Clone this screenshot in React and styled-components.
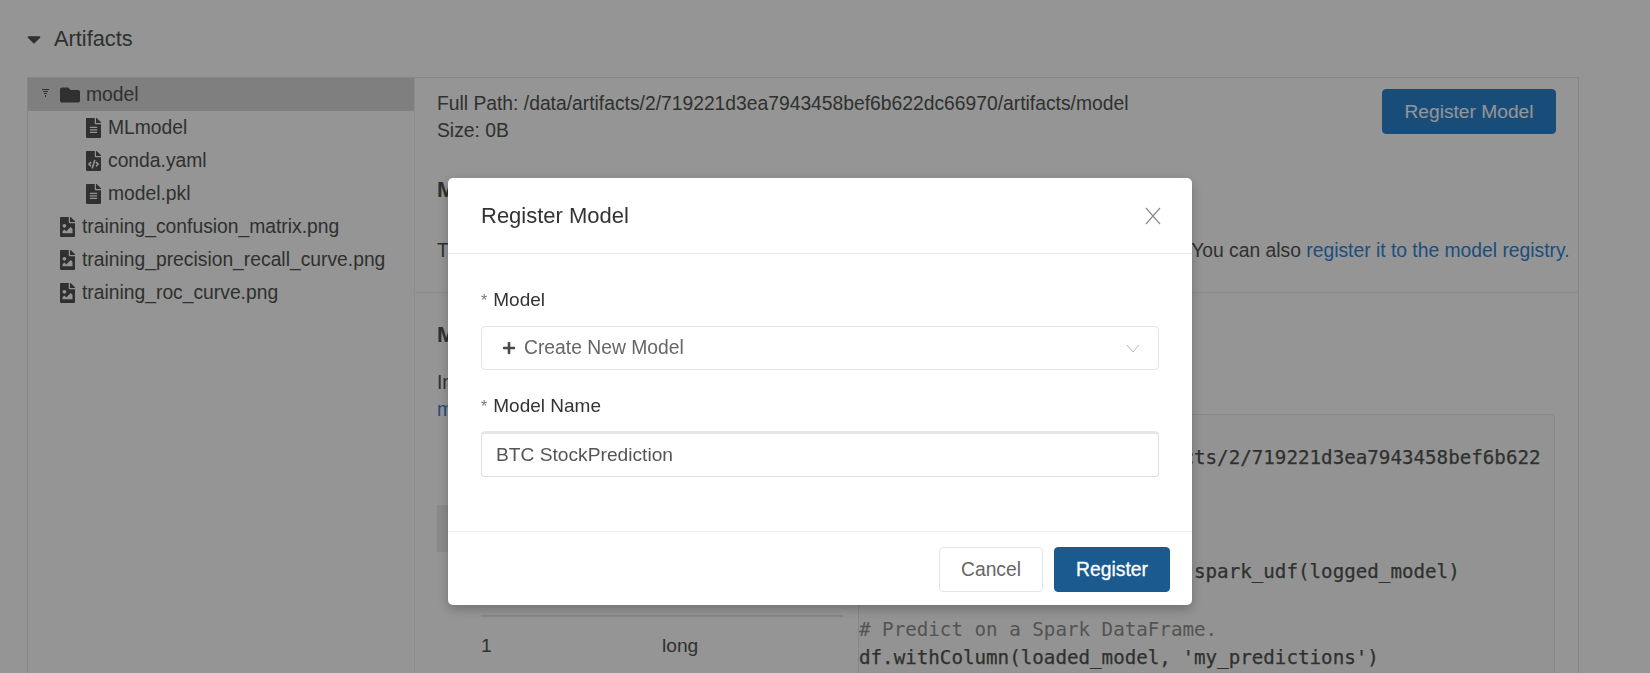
import React from 'react'
import styled, { createGlobalStyle } from 'styled-components'
import { FaCaretDown, FaFolder, FaFileAlt, FaFileCode, FaFileImage, FaPlus } from 'react-icons/fa'

const GlobalStyle = createGlobalStyle`
  html, body {
    margin: 0;
    height: 673px;
    overflow: hidden;
    background: #fff;
    font-family: "Liberation Sans", Arial, sans-serif;
    color: #4f5450;
  }
`

const Page = styled.div`
  width: 1650px;
  height: 673px;
  overflow: hidden;
`

const SectionTitle = styled.div`
  height: 77px;
  display: flex;
  align-items: center;
  padding-left: 27px;
  font-size: 21.8px;
  gap: 13px;

  svg {
    width: 14px;
    height: 22px;
  }
`

const Panel = styled.div`
  display: flex;
  margin: 0 71px 0 27px;
  border: 1px solid #e6e6e6;
  height: 640px;
  overflow: hidden;
`

const Sidebar = styled.div`
  width: 386px;
  flex: none;
  border-right: 1px solid #f2f2f2;
`

const TreeRow = styled.div`
  height: 33px;
  display: flex;
  align-items: center;
  padding-left: ${({ $depth }) => ($depth === 2 ? 58 : $depth === 1 ? 32 : 14)}px;
  font-size: 19.3px;
  background: ${({ $selected }) => ($selected ? '#d9d9d9' : 'transparent')};

  svg {
    flex: none;
  }
`

const TreeCaret = styled.svg`
  width: 7px;
  height: 8px;
  margin-right: 11px;
  position: relative;
  top: -2px;
`

const FileGlyph = styled.span`
  display: inline-flex;

  svg {
    width: 15px;
    height: 20px;
  }
`

const TreeLabel = styled.span`
  margin-left: ${({ $gap }) => $gap}px;
`

const Main = styled.div`
  flex: 1;
  min-width: 0;
`

const MainHeader = styled.div`
  height: 76px;
  display: flex;
  justify-content: space-between;
  align-items: center;
  padding: 2px 22px 0;
  box-sizing: border-box;
  border-bottom: 1px solid #fbfbfb;
  font-size: 19.3px;
  line-height: 27px;
`

const PrimaryButton = styled.button`
  background: #2a84d0;
  color: #fff;
  border: 1px solid #2a84d0;
  border-radius: 4px;
  width: 174px;
  height: 45px;
  margin-top: -10px;
  font: inherit;
  font-size: 19.2px;
`

const Block = styled.div`
  padding: 24px 22px 28px;
  border-bottom: 1px solid #eeeeee;
`

const BlockHeading = styled.div`
  font-size: 22px;
  line-height: 24px;
  font-weight: 700;
`

const Paragraph = styled.p`
  margin: ${({ $top }) => $top}px 0 0;
  font-size: 19.3px;
  line-height: 27px;
  white-space: nowrap;
`

const Link = styled.a`
  color: #2f86d8;
`

const SchemaBlock = styled.div`
  padding: 30px 22px 0;
`

const SchemaGrid = styled.div`
  display: grid;
  grid-template-columns: 406px 697px;
  column-gap: 15px;
  margin-top: 22px;
`

const SchemaTable = styled.div`
  margin-top: 82px;
`

const SchemaHead = styled.div`
  height: 47px;
  background: #eeeeee;
`

const SchemaRow = styled.div`
  display: grid;
  grid-template-columns: 181px 1fr;
  align-items: center;
  margin-left: 44px;
  height: ${({ $height }) => $height}px;
  border-bottom: ${({ $line }) => ($line ? '2px solid #e8e8e8' : 'none')};
  font-size: 19.2px;
`

const CodeBox = styled.pre`
  margin: 45px 0 0;
  border: 1px solid #e8e8e8;
  border-radius: 4px;
  background: #fbfbfb;
  padding: 29px 0 0;
  overflow: hidden;
  font-family: "DejaVu Sans Mono", monospace;
  font-size: 19.2px;
  line-height: 28.6px;
  height: 400px;
  -webkit-text-stroke: 0.25px #4f5450;
`

const CodeComment = styled.span`
  color: #8f8f8f;
  -webkit-text-stroke: 0;
`

const Backdrop = styled.div`
  position: fixed;
  inset: 0;
  background: rgba(0, 0, 0, 0.415);
`

const Modal = styled.div`
  position: absolute;
  left: 448px;
  top: 178px;
  width: 744px;
  height: 427px;
  display: flex;
  flex-direction: column;
  background: #fff;
  border-radius: 5px;
  box-shadow: 0 4px 12px rgba(0, 0, 0, 0.25);
`

const ModalHeader = styled.div`
  height: 75px;
  flex: none;
  display: flex;
  align-items: center;
  justify-content: space-between;
  padding: 0 31px 0 33px;
  border-bottom: 1px solid #e8e8e8;
  color: #333;
  font-size: 22px;
`

const ModalBody = styled.div`
  flex: 1;
  padding: 33px 33px 0;
`

const FieldLabel = styled.label`
  display: block;
  height: 26px;
  line-height: 26px;
  margin-top: ${({ $top }) => $top}px;
  font-size: 19px;
  color: #333;

  i {
    font-style: normal;
    font-size: 16px;
    color: #777;
    margin-right: 6px;
  }
`

const SelectBox = styled.div`
  height: 44px;
  box-sizing: border-box;
  margin-top: 13px;
  display: flex;
  align-items: center;
  padding: 0 18px 0 20px;
  border: 1px solid #e4e4e4;
  border-radius: 4px;
  color: #666;
  font-size: 19.3px;

  svg:first-child {
    color: #4a4a4a;
    margin-right: 8px;
  }

  svg:last-child {
    margin-left: auto;
  }
`

const TextInput = styled.input`
  display: block;
  width: 100%;
  height: 46px;
  box-sizing: border-box;
  margin-top: 12px;
  padding: 0 14px;
  border: 1px solid #e0e0e0;
  border-top: 3px solid #e6e6e6;
  border-radius: 4px;
  color: #555;
  font: inherit;
  font-size: 19.2px;
  outline: none;
`

const ModalFooter = styled.div`
  height: 74px;
  flex: none;
  box-sizing: border-box;
  display: flex;
  justify-content: flex-end;
  gap: 11px;
  padding: 15px 22px 0 0;
  border-top: 1px solid #eeeeee;
`

const FooterButton = styled.button`
  width: ${({ $primary }) => ($primary ? 116 : 104)}px;
  height: 45px;
  border-radius: 4px;
  border: 1px solid ${({ $primary }) => ($primary ? '#1a5a8e' : '#e6e6e6')};
  background: ${({ $primary }) => ($primary ? '#1a5a8e' : '#fff')};
  color: ${({ $primary }) => ($primary ? '#fff' : '#666')};
  font-family: inherit;
  font-size: 19.3px;
  -webkit-text-stroke: ${({ $primary }) => ($primary ? '0.3px #fff' : '0')};
`

const files = [
  { name: 'MLmodel', Icon: FaFileAlt, depth: 2 },
  { name: 'conda.yaml', Icon: FaFileCode, depth: 2 },
  { name: 'model.pkl', Icon: FaFileAlt, depth: 2 },
  { name: 'training_confusion_matrix.png', Icon: FaFileImage, depth: 1 },
  { name: 'training_precision_recall_curve.png', Icon: FaFileImage, depth: 1 },
  { name: 'training_roc_curve.png', Icon: FaFileImage, depth: 1 },
]

const App = () => (
  <Page>
    <GlobalStyle />
    <SectionTitle>
      <FaCaretDown />
      Artifacts
    </SectionTitle>
    <Panel>
      <Sidebar>
        <TreeRow $selected $depth={0}>
          <TreeCaret viewBox="0 0 7 8">
            <path d="M0 0h7v1H0zM1 2h5v1H1zM2 4h3v1H2zM3 6h1v2H3z" fill="#4f5450" />
          </TreeCaret>
          <FaFolder size={20} />
          <TreeLabel $gap={6}>model</TreeLabel>
        </TreeRow>
        {files.map(({ name, Icon, depth }) => (
          <TreeRow key={name} $depth={depth}>
            <FileGlyph>
              <Icon />
            </FileGlyph>
            <TreeLabel $gap={7}>{name}</TreeLabel>
          </TreeRow>
        ))}
      </Sidebar>
      <Main>
        <MainHeader>
          <div>
            Full Path: /data/artifacts/2/719221d3ea7943458bef6b622dc66970/artifacts/model
            <br />
            Size: 0B
          </div>
          <PrimaryButton>Register Model</PrimaryButton>
        </MainHeader>
        <Block>
          <BlockHeading>MLflow Model</BlockHeading>
          <Paragraph $top={35}>
            The code snippets below demonstrate how to make predictions using the logged model. You can
            also <Link>register it to the model registry.</Link>
          </Paragraph>
        </Block>
        <SchemaBlock>
          <BlockHeading>Model schema</BlockHeading>
          <SchemaGrid>
            <div>
              <Paragraph $top={0}>
                Input and output schema for your model. <br />
                <Link>more</Link>
              </Paragraph>
              <SchemaTable>
                <SchemaHead />
                <SchemaRow $height={63} $line>
                  <span>Name</span>
                  <span>Type</span>
                </SchemaRow>
                <SchemaRow $height={58}>
                  <span>1</span>
                  <span>long</span>
                </SchemaRow>
              </SchemaTable>
            </div>
            <CodeBox>
              {`logged_model = '/data/artifacts/2/719221d3ea7943458bef6b622
dc66970/artifacts/model'

`}
              <CodeComment># Load model as a Spark UDF.</CodeComment>
              {`
loaded_model = mlflow.pyfunc.spark_udf(logged_model)

`}
              <CodeComment># Predict on a Spark DataFrame.</CodeComment>
              {`
df.withColumn(loaded_model, 'my_predictions')`}
            </CodeBox>
          </SchemaGrid>
        </SchemaBlock>
      </Main>
    </Panel>
    <Backdrop>
      <Modal>
        <ModalHeader>
          Register Model
          <svg width="16" height="18" viewBox="0 0 16 18" fill="none" stroke="#8c8c8c" strokeWidth="1.2">
            <path d="M1 1l14 16M15 1L1 17" />
          </svg>
        </ModalHeader>
        <ModalBody>
          <FieldLabel $top={0}>
            <i>*</i>Model
          </FieldLabel>
          <SelectBox>
            <FaPlus size={14} />
            Create New Model
            <svg width="14" height="9" viewBox="0 0 14 9" fill="none" stroke="#b5b5b5" strokeWidth="1">
              <path d="M1 1l6 7 6-7" />
            </svg>
          </SelectBox>
          <FieldLabel $top={23}>
            <i>*</i>Model Name
          </FieldLabel>
          <TextInput defaultValue="BTC StockPrediction" />
        </ModalBody>
        <ModalFooter>
          <FooterButton>Cancel</FooterButton>
          <FooterButton $primary>Register</FooterButton>
        </ModalFooter>
      </Modal>
    </Backdrop>
  </Page>
)

export default App
